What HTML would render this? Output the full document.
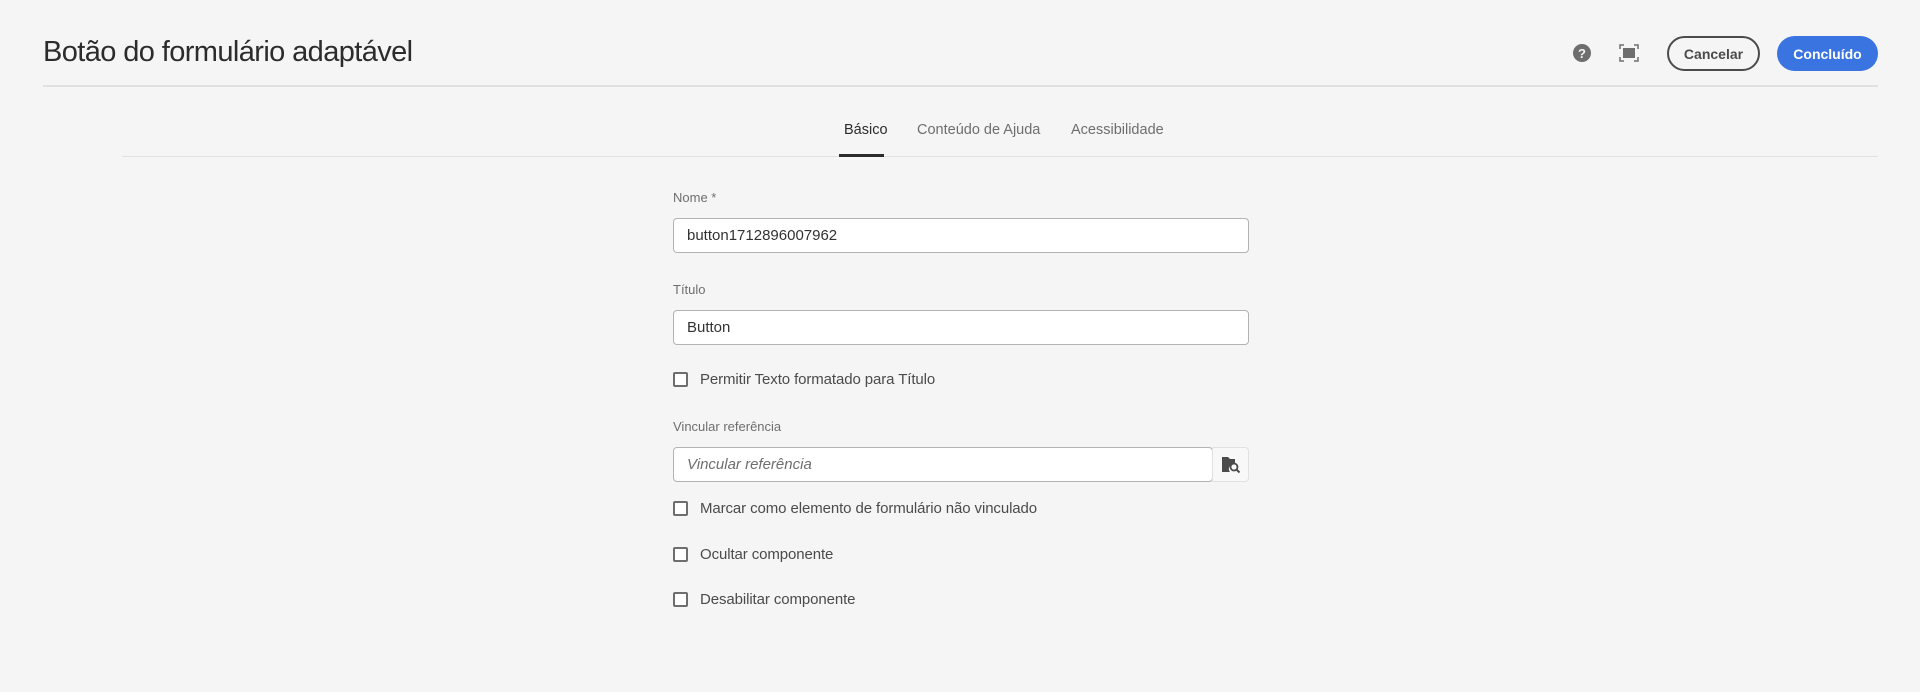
<!DOCTYPE html>
<html><head><meta charset="utf-8"><style>
*{box-sizing:border-box;margin:0;padding:0}
body{width:1920px;height:692px;background:#f5f5f5;font-family:"Liberation Sans",sans-serif;color:#323232;position:relative;overflow:hidden}
.a{position:absolute}
h1{position:absolute;left:43px;top:36px;font-size:29px;font-weight:300;color:#2c2c2c;letter-spacing:-0.6px}
.hl{left:43px;top:85px;width:1835px;height:2px;background:#e1e1e1}
.btn{position:absolute;top:36px;height:35px;border-radius:18px;font-size:14px;font-weight:bold;display:flex;align-items:center;justify-content:center}
.tab{position:absolute;top:122px;font-size:14.5px;color:#6e6e6e}
.lbl{position:absolute;left:673px;font-size:13px;color:#6e6e6e}
.inp{position:absolute;left:673px;width:576px;height:35px;border:1px solid #b3b3b3;border-radius:4px;background:#fff;font-size:15px;padding:0 13px;display:flex;align-items:center;color:#323232}
.cb{position:absolute;left:673px;display:flex;align-items:center;font-size:15px;color:#4b4b4b;letter-spacing:-0.1px}
.cb i{width:15px;height:15px;border:2px solid #6e6e6e;border-radius:2px;margin-right:12px;display:inline-block;background:#fff}
</style></head><body>
<h1>Botão do formulário adaptável</h1>
<div class="a hl"></div>
<svg class="a" style="left:1573px;top:44px" width="18" height="18" viewBox="0 0 18 18"><circle cx="9" cy="9" r="9" fill="#6e6e6e"/><text x="9" y="14" text-anchor="middle" font-family="Liberation Sans" font-weight="bold" font-size="13" fill="#f5f5f5">?</text></svg>
<svg class="a" style="left:1619px;top:44px" width="20" height="18" viewBox="0 0 20 18" fill="none" stroke="#6e6e6e" stroke-width="1.5"><path d="M1 5V1h4M15 1h4v4M19 13v4h-4M5 17H1v-4"/><rect x="4" y="4" width="12" height="10" fill="#6e6e6e" stroke="none"/></svg>
<div class="btn" style="left:1667px;width:93px;border:2px solid #4b4b4b;color:#4b4b4b">Cancelar</div>
<div class="btn" style="left:1777px;width:101px;background:#3a74e1;color:#fff">Concluído</div>
<div class="tab" style="left:844px;color:#2c2c2c">Básico</div>
<div class="tab" style="left:917px">Conteúdo de Ajuda</div>
<div class="tab" style="left:1071px">Acessibilidade</div>
<div class="a" style="left:122px;top:156px;width:1756px;height:1px;background:#e1e1e1"></div>
<div class="a" style="left:839px;top:154px;width:45px;height:3px;background:#2c2c2c"></div>
<div class="lbl" style="top:190px">Nome *</div>
<div class="inp" style="top:218px">button1712896007962</div>
<div class="lbl" style="top:282px">Título</div>
<div class="inp" style="top:310px">Button</div>
<div class="cb" style="top:371px"><i></i>Permitir Texto formatado para Título</div>
<div class="lbl" style="top:419px">Vincular referência</div>
<div class="inp" style="top:447px;width:540px;font-style:italic;color:#6e6e6e">Vincular referência</div>
<div class="a" style="left:1212px;top:447px;width:37px;height:35px;border:1px solid #e1e1e1;border-radius:0 4px 4px 0;background:#f8f8f8"></div>
<svg class="a" style="left:1221px;top:455px" width="20" height="19" viewBox="0 0 20 19"><path d="M1 2h6l2 2h5v5a5 5 0 0 0-5 8H1z" fill="#4b4b4b"/><circle cx="13" cy="12" r="3.5" fill="none" stroke="#4b4b4b" stroke-width="1.8"/><path d="M15.5 14.5l3 3" stroke="#4b4b4b" stroke-width="2"/></svg>
<div class="cb" style="top:500px"><i></i>Marcar como elemento de formulário não vinculado</div>
<div class="cb" style="top:546px"><i></i>Ocultar componente</div>
<div class="cb" style="top:591px"><i></i>Desabilitar componente</div>
</body></html>
